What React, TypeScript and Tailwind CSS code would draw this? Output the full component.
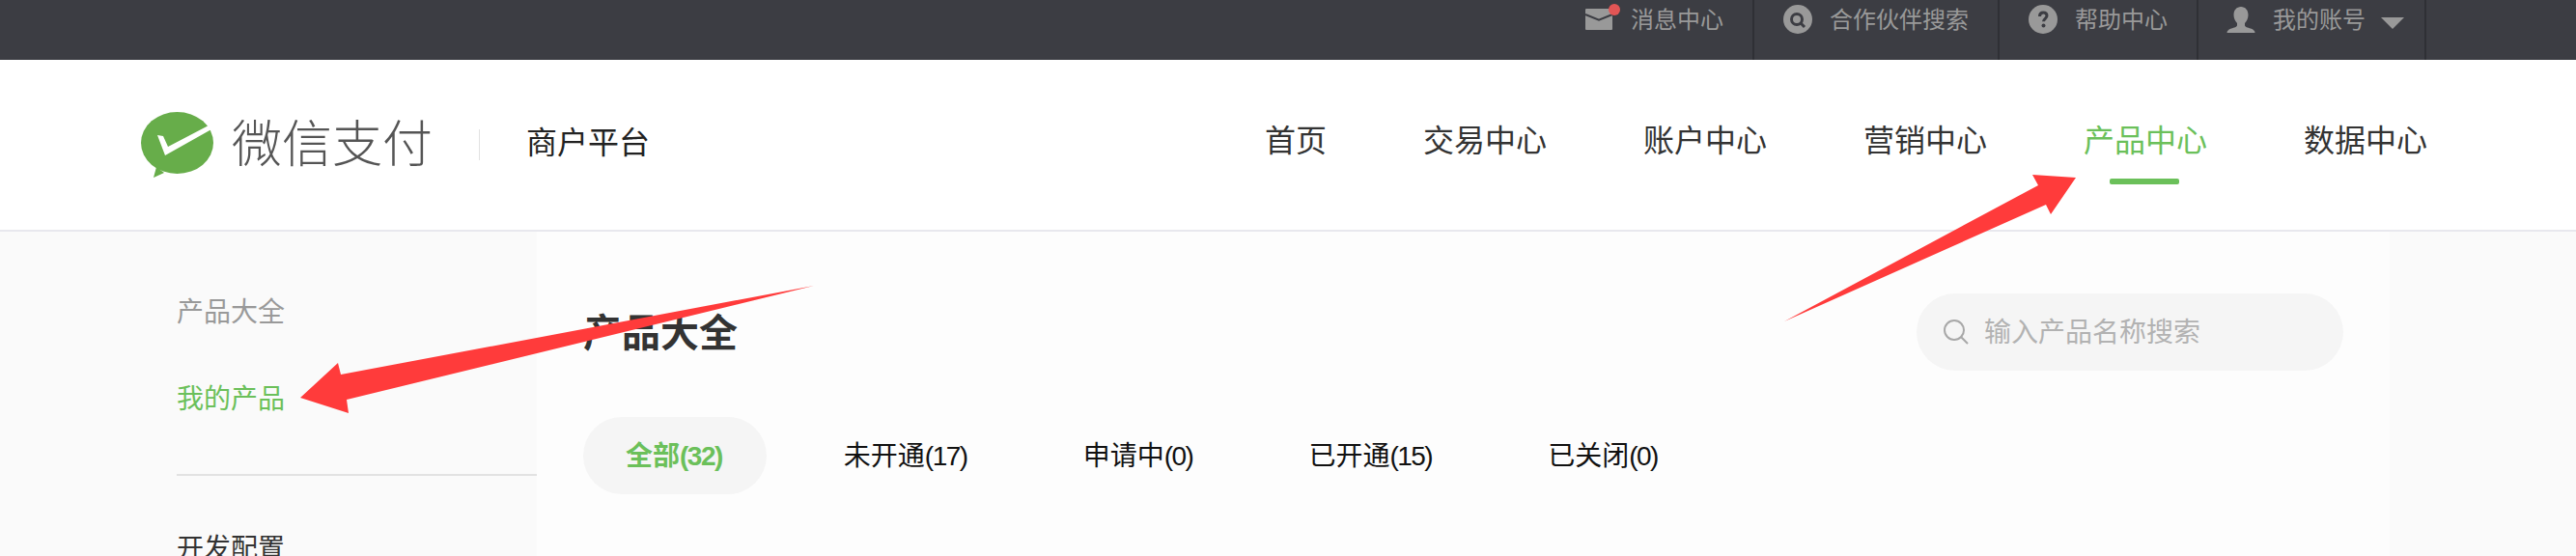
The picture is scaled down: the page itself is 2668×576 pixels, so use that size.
const topItems = [
  { label: "消息中心", icon: <MailIcon />, className: "pr-[30px]" },
  { label: "合作伙伴搜索", icon: <SearchBadgeIcon />, className: "pl-[30px] pr-[30px]" },
  { label: "帮助中心", icon: <HelpIcon />, className: "pl-[30px] pr-[30px]" },
]

const navItems = ["首页", "交易中心", "账户中心", "营销中心", "产品中心", "数据中心"]

const tabs = [
  { name: "全部", count: "(32)" },
  { name: "未开通", count: "(17)" },
  { name: "申请中", count: "(0)" },
  { name: "已开通", count: "(15)" },
  { name: "已关闭", count: "(0)" },
]

function MailIcon() {
  return (
    <svg width="36" height="30" viewBox="0 0 36 30" className="-mr-[7px] shrink-0 overflow-visible">
      <rect x="0" y="2" width="28" height="22" rx="1" fill="#999" />
      <path d="M0 8l14 5.700L28 8" fill="none" stroke="#3c3d43" strokeWidth="2" />
      <circle cx="30" cy="3" r="6" fill="#e25555" />
    </svg>
  )
}

function SearchBadgeIcon() {
  return (
    <svg width="30" height="30" viewBox="0 0 30 30" className="-mt-[2px] shrink-0">
      <circle cx="15" cy="15" r="15" fill="#999" />
      <circle cx="14" cy="15" r="5.500" fill="none" stroke="#3c3d43" strokeWidth="3" />
      <path d="M17.500 18.500l4.500 4.500" stroke="#3c3d43" strokeWidth="3" />
    </svg>
  )
}

function HelpIcon() {
  return (
    <svg width="30" height="30" viewBox="0 0 30 30" className="-mt-[2px] shrink-0">
      <circle cx="15" cy="15" r="15" fill="#999" />
      <path d="M11.500 12c0-2.500 1.500-4 3.700-4 2.200 0 3.800 1.300 3.800 3.300 0 3-3.500 3-3.500 6" fill="none" stroke="#3c3d43" strokeWidth="3" />
      <circle cx="15.500" cy="21.500" r="2" fill="#3c3d43" />
    </svg>
  )
}

function UserIcon() {
  return (
    <svg width="30" height="28" viewBox="0 0 30 28" className="shrink-0">
      <path d="M15 0c4.500 0 7.500 3.500 7.500 8.500 0 3.500-1.500 6.500-3.500 8.500v2c0 2 3 2.500 6 3.500 3 1 4.500 2.500 4.500 4.500H.5c0-2 1.500-3.500 4.500-4.500 3-1 6-1.500 6-3.500v-2c-2-2-3.500-5-3.500-8.500C7.500 3.500 10.500 0 15 0z" fill="#999" />
    </svg>
  )
}

function LogoMark() {
  return (
    <svg width="76" height="68" viewBox="0 0 76 68" className="shrink-0">
      <ellipse cx="37.500" cy="32" rx="37.500" ry="32" fill="#67ad4a" />
      <path d="M16 57l-3 11 11-5z" fill="#67ad4a" />
      <path d="M17 24l6 1 5 11 42-22 3 4-48 27z" fill="#fff" />
    </svg>
  )
}

export default function App() {
  return (
    <div className="relative h-[576px] w-[2668px] overflow-hidden bg-white font-['Liberation_Sans','Noto_Sans_CJK_SC',sans-serif]">
      {/* Top bar */}
      <div className="flex h-[62px] justify-end bg-[#3c3d43] pr-[155px] text-[24px] leading-[28px] text-[#999]">
        {topItems.map((item) => (
          <div key={item.label} className={`flex items-start gap-[18px] border-r-2 border-[#2f3035] pt-[7px] ${item.className}`}>
            {item.icon}
            <span>{item.label}</span>
          </div>
        ))}
        <div className="flex items-start border-r-2 border-[#2f3035] pl-[29px] pr-[21px] pt-[7px]">
          <UserIcon />
          <span className="ml-[18px]">我的账号</span>
          <span className="ml-[16px] mt-[11px] h-0 w-0 border-x-[12px] border-t-[12px] border-x-transparent border-t-[#999]" />
        </div>
      </div>

      {/* Header */}
      <div className="flex h-[178px] items-center justify-between border-b-2 border-[#e8e8ee] bg-white pl-[146px] pr-[154px]">
        <div className="flex items-center">
          <LogoMark />
          <span className="ml-[18px] text-[52px] font-light leading-[60px] text-[#555]">微信支付</span>
          <span className="ml-[48px] h-[32px] w-[1px] bg-[#e2e2e2]" />
          <span className="mb-[4px] ml-[48px] text-[32px] text-[#222]">商户平台</span>
        </div>
        <div className="flex gap-[100px] pb-[8px]">
          {navItems.map((item) => (
            <div key={item} className="relative">
              <span className={item === "产品中心" ? "text-[32px] text-[#6bc05a]" : "text-[32px] text-[#333]"}>{item}</span>
              {item === "产品中心" && (
                <span className="absolute left-[27px] top-[63px] h-[6px] w-[72px] rounded-[2px] bg-[#6bc05a]" />
              )}
            </div>
          ))}
        </div>
      </div>

      {/* Body */}
      <div className="flex h-[336px] bg-[#fafafa]">
        <div className="w-[556px] shrink-0 pl-[183px] pt-[64px] text-[28px] leading-[40px]">
          <div className="text-[#999]">产品大全</div>
          <div className="mt-[50px] text-[#6bc05a]">我的产品</div>
          <div className="mt-[57px] h-[2px] bg-[#e2e2e2]" />
          <div className="mt-[56px] text-[#333]">开发配置</div>
        </div>
        <div className="flex-1 bg-[#fdfdfd] px-[48px] pt-[64px]">
          <div className="flex items-center justify-between">
            <h1 className="pt-[2px] text-[40px] font-bold text-[#333]">产品大全</h1>
            <div className="flex h-[80px] w-[442px] items-center rounded-[40px] bg-[#f5f5f5] pl-[27px]">
              <svg width="28" height="28" viewBox="0 0 28 28" fill="none" stroke="#a8a8a8" strokeWidth="2">
                <circle cx="12" cy="12" r="10" />
                <path d="M19 19l7 7" />
              </svg>
              <span className="ml-[15px] pt-[2px] text-[28px] text-[#b2b2b2]">输入产品名称搜索</span>
            </div>
          </div>
          <div className="mt-[48px] flex gap-[32px]">
            {tabs.map((tab, i) => (
              <div
                key={tab.name}
                className={
                  i === 0
                    ? "mr-[4px] flex h-[80px] items-center rounded-[40px] bg-[#f5f5f5] pl-[44px] pr-[46px] pt-[2px] text-[28px] font-bold text-[#6bc05a]"
                    : "flex h-[80px] items-center rounded-[40px] px-[44px] pt-[2px] text-[28px] text-[#111]"
                }
              >
                {tab.name}
                <span className="tracking-[-1.5px]">{tab.count}</span>
              </div>
            ))}
          </div>
        </div>
        <div className="w-[193px] shrink-0" />
      </div>

      {/* Annotation arrows */}
      <svg width="2668" height="576" viewBox="0 0 2668 576" className="pointer-events-none absolute inset-0">
        <polygon points="311,412 350,376 353,388 843,296 359,414 361,428" fill="#ff3b3b" />
        <polygon points="1848,333 2111,192 2105,181 2150,184 2124,222 2119,212" fill="#ff3b3b" />
      </svg>
    </div>
  )
}
